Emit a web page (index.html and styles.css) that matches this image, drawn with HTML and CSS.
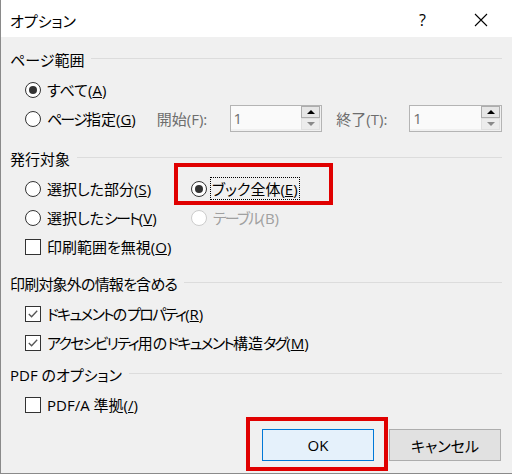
FILE: index.html
```html
<!DOCTYPE html>
<html lang="ja">
<head>
  <meta charset="UTF-8" />
  <meta name="viewport" content="width=device-width, initial-scale=1.0"/>
  <title>オプション</title>
  <link rel="stylesheet" href="styles.css">
</head>
<body>
  <div class="dialog">
    <header class="titlebar">
      <span class="title">オプション</span>
      <span class="help">?</span>
      <svg class="close" width="14" height="14" viewBox="0 0 14 14">
        <path d="M1 1 L13 13 M13 1 L1 13" stroke="#000" stroke-width="1.1" fill="none"/>
      </svg>
    </header>

    <div class="body">
      <section class="group">
        <div class="group-head"><span>ページ範囲</span></div>
        <div class="row">
          <label class="opt"><span class="radio checked"></span><span>すべて(<u>A</u>)</span></label>
        </div>
        <div class="row">
          <label class="opt opt-wide"><span class="radio"></span><span><span class="k">ページ</span>指定(<u>G</u>)</span></label>
          <span class="field-label">開始(F):</span>
          <div class="spin">
            <span class="spin-value">1</span>
            <div class="spin-btns">
              <span class="spin-up"></span>
              <span class="spin-down"></span>
            </div>
          </div>
          <span class="field-label">終了(T):</span>
          <div class="spin">
            <span class="spin-value">1</span>
            <div class="spin-btns">
              <span class="spin-up"></span>
              <span class="spin-down"></span>
            </div>
          </div>
        </div>
      </section>

      <section class="group group-2">
        <div class="group-head"><span>発行対象</span></div>
        <div class="grid">
          <label class="opt"><span class="radio"></span><span>選択した部分(<u>S</u>)</span></label>
          <div class="highlight">
            <label class="opt"><span class="radio checked"></span><span class="focus">ブック全体(<u>E</u>)</span></label>
          </div>
          <label class="opt"><span class="radio"></span><span>選択した<span class="k">シート</span>(<u>V</u>)</span></label>
          <label class="opt disabled"><span class="radio"></span><span><span class="k">テーブル</span>(B)</span></label>
          <label class="opt"><span class="check"></span><span>印刷範囲を無視(<u>O</u>)</span></label>
        </div>
      </section>

      <section class="group group-3">
        <div class="group-head"><span class="tight">印刷対象外の情報を含める</span></div>
        <div class="row">
          <label class="opt">
            <span class="check">
              <svg width="14" height="14" viewBox="0 0 14 14"><path d="M2.8 7 L5.6 9.8 L11.2 3.8" stroke="#555" stroke-width="1.3" fill="none"/></svg>
            </span>
            <span><span class="k">ドキュメント</span>の<span class="k">プロパティ</span>(<u>R</u>)</span>
          </label>
        </div>
        <div class="row">
          <label class="opt">
            <span class="check">
              <svg width="14" height="14" viewBox="0 0 14 14"><path d="M2.8 7 L5.6 9.8 L11.2 3.8" stroke="#555" stroke-width="1.3" fill="none"/></svg>
            </span>
            <span><span class="k">アクセシビリティ</span>用の<span class="k">ドキュメント</span>構造<span class="k">タグ</span>(<u>M</u>)</span>
          </label>
        </div>
      </section>

      <section class="group group-4">
        <div class="group-head"><span>PDF のオプション</span></div>
        <div class="row">
          <label class="opt"><span class="check"></span><span>PDF/A 準拠(<u>/</u>)</span></label>
        </div>
      </section>

      <div class="buttons">
        <div class="highlight highlight-ok">
          <button class="btn btn-ok">OK</button>
        </div>
        <button class="btn">キャンセル</button>
      </div>
    </div>
  </div>
</body>
</html>
```

FILE: styles.css
```css
body {
  margin: 0;
  font-family: "Open Sans", "Noto Sans CJK JP", sans-serif;
  font-feature-settings: "palt";
  font-size: 15px;
  color: #000;
  background-color: #f0f0f0;
}

.dialog {
  width: 512px;
  height: 474px;
  box-sizing: border-box;
  background-color: #f0f0f0;
  border-left: 1px solid #8a8a8a;
  border-bottom: 1px solid #8a8a8a;
  overflow: hidden;
}

/* katakana runs are set narrower in the UI font */
.k {
  letter-spacing: -1.8px;
}

.tight {
  letter-spacing: -0.8px;
}

/* title bar */
.titlebar {
  height: 37px;
  background-color: #fff;
  display: flex;
  align-items: center;
  padding-left: 9px;
}

.title {
  flex: 1;
  font-size: 15px;
  margin-top: 3px;
}

.help {
  font-size: 16px;
  margin-right: 48px;
  margin-top: 2px;
}

.close {
  margin-right: 24px;
  margin-top: 3px;
}

/* body */
.body {
  padding: 11px 10px 0 9px;
}

.group-2 { margin-top: 14px; }
.group-3 { margin-top: 11px; }
.group-4 { margin-top: 6px; }

.group-head {
  height: 22px;
  display: flex;
  align-items: center;
  gap: 7px;
  margin-bottom: 5px;
}

.group-head::after {
  content: "";
  flex: 1;
  height: 1px;
  background-color: #dcdcdc;
  margin-top: -2px;
}

.row {
  height: 29px;
  display: flex;
  align-items: center;
  padding-left: 15px;
}

.grid {
  display: grid;
  grid-template-columns: 166px auto;
  grid-auto-rows: 29px;
  align-items: center;
  justify-items: start;
  padding-left: 15px;
}

.opt {
  display: flex;
  align-items: center;
  gap: 6px;
  white-space: nowrap;
}

.opt-wide {
  width: 132px;
}

.opt.disabled {
  color: #a0a0a0;
}

.radio {
  width: 14px;
  height: 14px;
  border: 1px solid #333;
  border-radius: 50%;
  background-color: #fff;
  display: flex;
  align-items: center;
  justify-content: center;
  flex-shrink: 0;
}

.radio.checked::after {
  content: "";
  width: 8px;
  height: 8px;
  border-radius: 50%;
  background-color: #333;
}

.disabled .radio {
  border-color: #cccccc;
}

.check {
  width: 14px;
  height: 14px;
  border: 1px solid #333;
  background-color: #fff;
  display: flex;
  align-items: center;
  justify-content: center;
  flex-shrink: 0;
}

.focus {
  outline: 1px dotted #000;
  outline-offset: 0;
  padding: 0 1px;
  margin-left: -2px;
}

/* spin boxes */
.field-label {
  width: 73px;
  color: #6d6d6d;
}

.spin {
  width: 91px;
  height: 25px;
  border: 1px solid #b4b4b4;
  display: flex;
  background-color: #f0f0f0;
  margin-right: 14px;
}

.spin:last-child {
  margin-right: 0;
}

.spin-value {
  flex: 1;
  background-color: #fafafa;
  color: #6d6d6d;
  padding-left: 3px;
  line-height: 25px;
  margin-bottom: 2px;
}

.spin-btns {
  width: 19px;
  display: flex;
  flex-direction: column;
  padding: 0 1px 1px 0;
}

.spin-up,
.spin-down {
  flex: 1;
  display: flex;
  align-items: center;
  justify-content: center;
}

.spin-up {
  background-color: #e6e6e6;
  border: 1px solid #adadad;
}

.spin-down {
  background-color: #ececec;
  border: 1px solid #e0e0e0;
}

.spin-up::after {
  content: "";
  border-left: 4px solid transparent;
  border-right: 4px solid transparent;
  border-bottom: 4px solid #000;
}

.spin-down::after {
  content: "";
  border-left: 4px solid transparent;
  border-right: 4px solid transparent;
  border-top: 4px solid #8a8a8a;
}

/* red annotation boxes */
.highlight {
  position: relative;
}

.highlight::after {
  content: "";
  position: absolute;
  left: -17px;
  right: -34px;
  top: -15px;
  bottom: -6px;
  border: 4px solid #e00000;
  pointer-events: none;
}

.highlight-ok::after {
  left: -16px;
  right: -14px;
  top: -12px;
  bottom: -10px;
}

/* buttons */
.buttons {
  display: flex;
  justify-content: flex-end;
  gap: 15px;
  margin-top: 10px;
  padding-right: 1px;
}

.btn {
  width: 112px;
  height: 32px;
  font-family: inherit;
  font-feature-settings: "palt";
  font-size: 15px;
  color: #000;
  background-color: #e1e1e1;
  border: 1px solid #adadad;
  padding: 0;
  display: block;
}

.btn-ok {
  background-color: #e5f1fb;
  border-color: #0078d7;
}
```
